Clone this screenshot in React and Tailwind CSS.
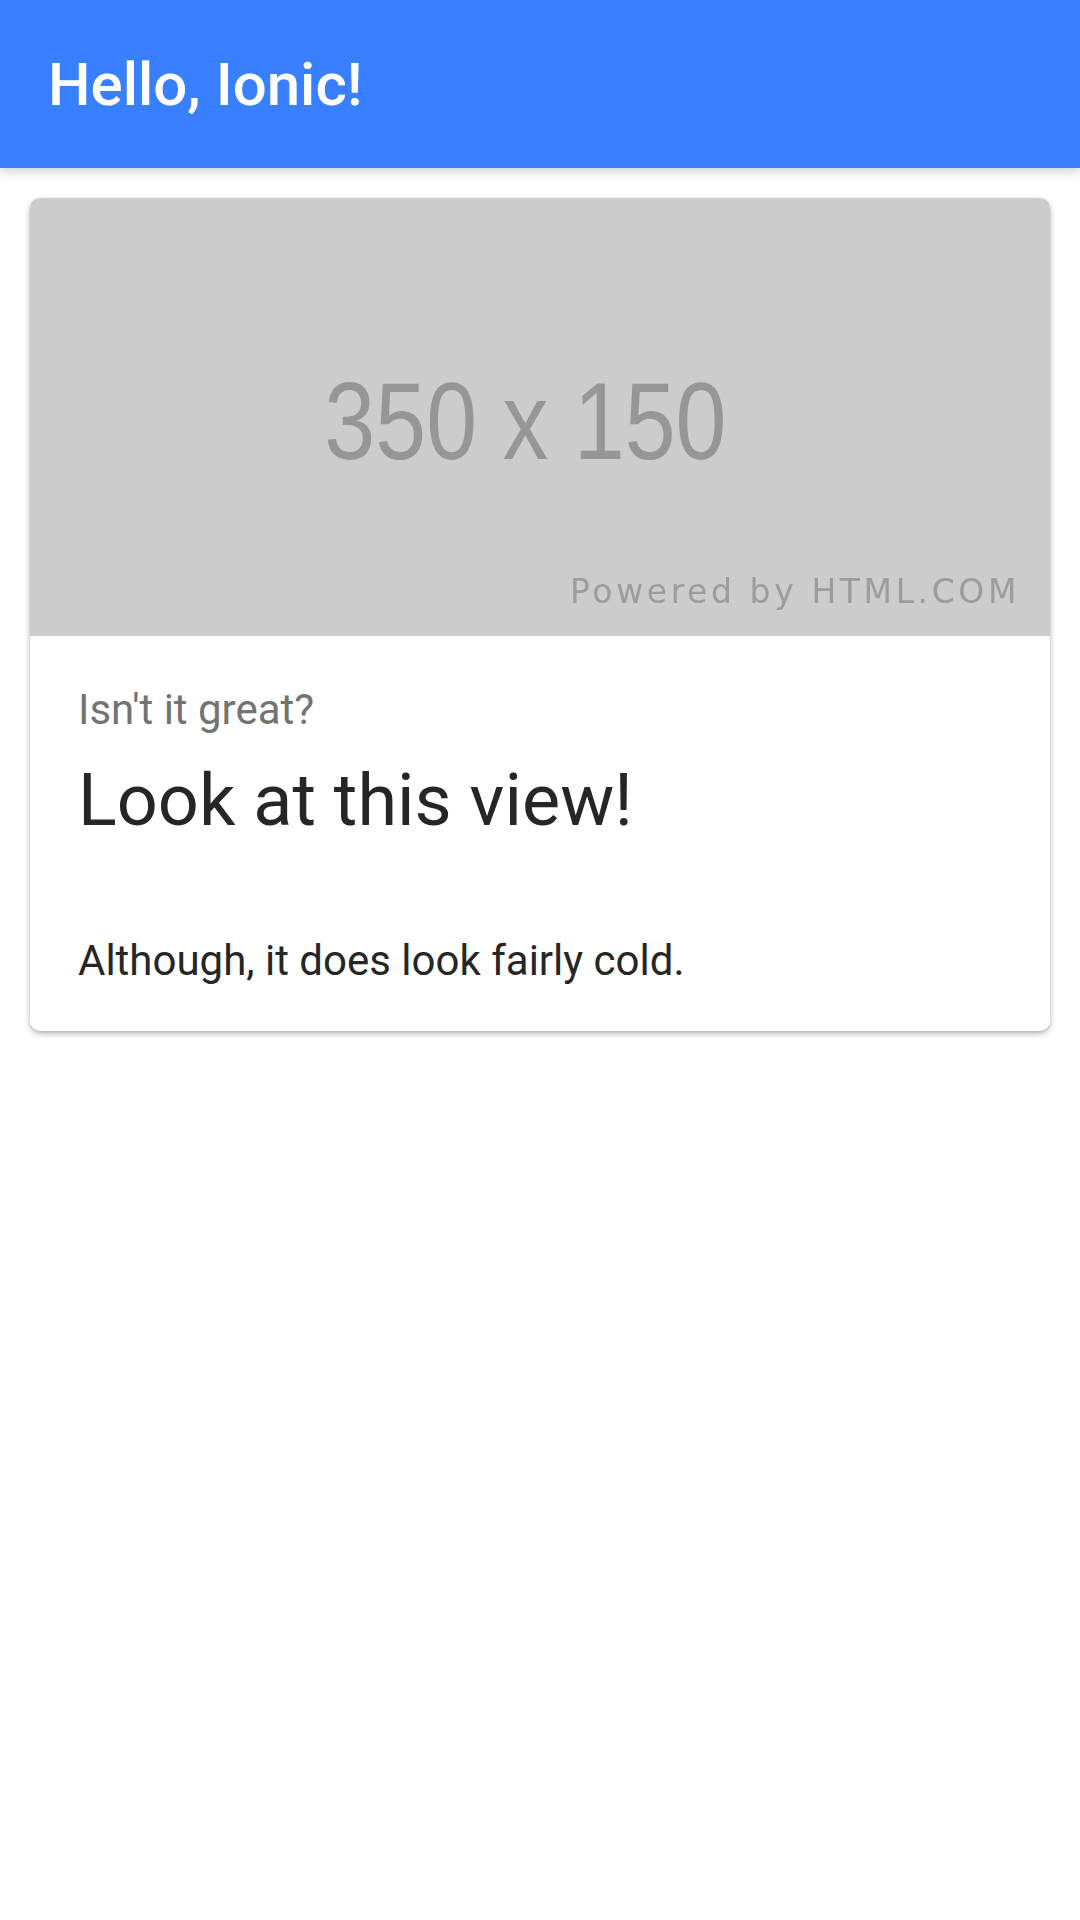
export default function App() {
  return (
    <div className="min-h-[1920px] bg-white font-['Roboto',sans-serif]">
      {/* Toolbar */}
      <header className="relative z-10 h-[168px] bg-[#3880ff] flex items-center pl-[48px] shadow-[0_4px_10px_rgba(0,0,0,0.18)]">
        <h1 className="text-[60px] leading-none font-medium text-white pt-[2px]">Hello, Ionic!</h1>
      </header>

      {/* Card */}
      <div className="mx-[30px] mt-[30px] rounded-[10px] overflow-hidden bg-white shadow-[0_3px_6px_rgba(0,0,0,0.25),0_1px_3px_rgba(0,0,0,0.12)]">
        <div className="relative h-[438px] bg-[#cccccc] flex items-center justify-center">
          <span className="block mr-[30px] mt-[8px] text-[109px] leading-none text-[#969696] font-['Liberation_Sans',Arial,sans-serif] scale-x-[0.84] blur-[0.6px]">
            350 x 150
          </span>
          <span className="absolute right-[30px] bottom-[28px] text-[33px] leading-none tracking-[3.6px] text-[#9c9c9c] font-['DejaVu_Sans',Verdana,sans-serif] blur-[0.5px]">
            Powered by HTML.COM
          </span>
        </div>

        <div className="px-[48px] pt-[49px] pb-[46px]">
          <p className="text-[42px] leading-[49px] text-[#737373]">Isn't it great?</p>
          <h2 className="mt-[23px] text-[72px] leading-[87px] text-[#262626]">Look at this view!</h2>
          <p className="mt-[92px] text-[42px] leading-[49px] text-[#262626]">Although, it does look fairly cold.</p>
        </div>
      </div>
    </div>
  );
}
